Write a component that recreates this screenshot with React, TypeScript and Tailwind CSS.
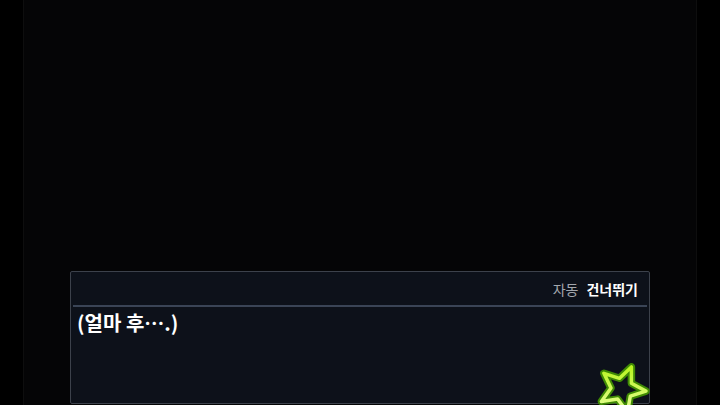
import React from "react";

const font = { fontFamily: '"Noto Sans CJK KR", "Noto Sans", sans-serif' };

const pts = (() => {
  const cx = 622;
  const cy = 389;
  const out: string[] = [];
  for (let i = 0; i < 10; i++) {
    const a = ((-139 + i * 36) * Math.PI) / 180;
    const r = i % 2 === 0 ? 24 : 11;
    out.push(`${(cx + r * Math.cos(a)).toFixed(1)},${(cy + r * Math.sin(a)).toFixed(1)}`);
  }
  return out.join(" ");
})();

const Star = () => (
  <svg className="absolute left-0 top-0" width="720" height="405" viewBox="0 0 720 405">
    <defs>
      <linearGradient id="g" x1="0" y1="0" x2="0" y2="1">
        <stop offset="0" stopColor="#b8f520" />
        <stop offset="1" stopColor="#e8ff9a" />
      </linearGradient>
    </defs>
    <polygon points={pts} fill="none" stroke="#3f8a04" strokeWidth="7.5" strokeLinejoin="round" />
    <polygon points={pts} fill="none" stroke="url(#g)" strokeWidth="3.5" strokeLinejoin="round" />
  </svg>
);

export default function App() {
  return (
    <div className="relative w-[720px] h-[405px] bg-black overflow-hidden" style={font}>
      <div className="mx-auto w-[674px] h-full bg-[#050506] border-x border-[#0e0e0e] flex flex-col justify-end">
        <div className="mx-[46px] mb-[1px] h-[133px] bg-[#0d111a] border border-[#3c414b] rounded-[2px] flex flex-col">
          <div className="h-[33px] flex items-center justify-end gap-[8px] pr-[11px] text-[14px] leading-none">
            <span className="text-[#a3a7ad]">자동</span>
            <span className="text-white font-bold">건너뛰기</span>
          </div>
          <div className="mx-[2px] h-[2px] bg-[#3a4456]" />
          <div className="px-[6px] pt-[2px] text-white font-bold text-[20px] leading-[28px]">(얼마 후….)</div>
        </div>
      </div>
      <Star />
    </div>
  );
}
